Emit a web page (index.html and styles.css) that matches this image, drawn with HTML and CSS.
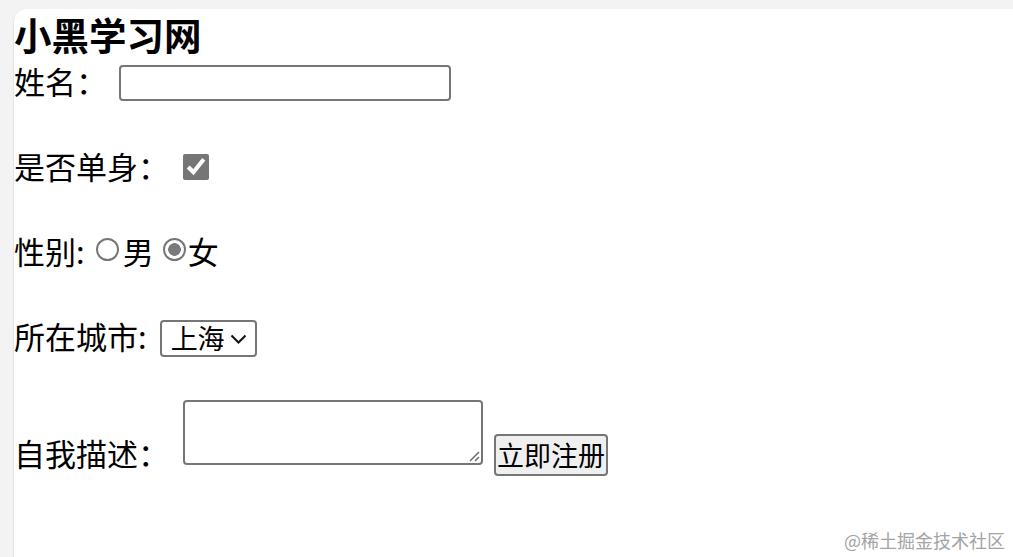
FILE: index.html
```html
<!DOCTYPE html>
<html lang="zh-CN">
<head>
<meta charset="utf-8">
<title>小黑学习网</title>
<link rel="stylesheet" href="styles.css">
</head>
<body>
<div class="card">
  <h3 class="title">小黑学习网</h3>
  <form class="form">
    <div class="row row-name">
      <span class="label">姓名：</span>
      <input class="text-input" type="text">
    </div>
    <div class="row row-single">
      <span class="label">是否单身：</span>
      <input class="check" type="checkbox" checked>
    </div>
    <div class="row row-gender">
      <span class="label">性别:</span>
      <input class="radio radio-male" type="radio" name="gender">
      <span class="opt opt-male">男</span>
      <input class="radio radio-female" type="radio" name="gender" checked>
      <span class="opt">女</span>
    </div>
    <div class="row row-city">
      <span class="label">所在城市:</span>
      <span class="select-wrap">
        <select class="select">
          <option>北京</option>
          <option selected>上海</option>
          <option>广州</option>
        </select>
        <svg class="chevron" width="17" height="10" viewBox="0 0 17 10"><path d="M1.5 1.5 L8.5 8.5 L15.5 1.5" fill="none" stroke="#111" stroke-width="2"/></svg>
      </span>
    </div>
    <div class="row row-desc">
      <span class="label label-desc">自我描述：</span>
      <span class="area-wrap">
        <textarea class="area"></textarea>
        <svg class="grip" width="12" height="12" viewBox="0 0 12 12"><path d="M11 2 L2 11 M11 7 L7 11" fill="none" stroke="#6b6b6b" stroke-width="1.5"/></svg>
      </span>
      <button class="submit" type="button">立即注册</button>
    </div>
  </form>
</div>
<div class="watermark">@稀土掘金技术社区</div>
</body>
</html>
```

FILE: styles.css
```css
html, body {
  margin: 0;
  padding: 0;
  height: 100%;
  overflow: hidden;
}
body {
  background: #f3f3f3;
  font-family: "Noto Sans CJK SC", "Microsoft YaHei", sans-serif;
  color: #000;
  position: relative;
}
.card {
  margin: 9px 0 0 13px;
  min-height: 560px;
  background: #fff;
  border-left: 1px solid #e6e6e6;
  border-top-left-radius: 13px;
  padding-top: 3px;
}
.title {
  margin: 0;
  font-size: 37.5px;
  font-weight: 700;
  line-height: 44px;
  height: 44px;
}
.form {
  display: flex;
  flex-direction: column;
  margin-top: 2px;
}
.row {
  display: flex;
  align-items: center;
  height: 50px;
  margin-bottom: 35px;
}
.label {
  font-size: 31px;
  line-height: 31px;
  margin-bottom: 6px;
  white-space: nowrap;
}
.text-input {
  margin: 0 0 0 12px;
  width: 332px;
  height: 36px;
  box-sizing: border-box;
  border: 2px solid #767676;
  border-radius: 4px;
  background: #fff;
  padding: 0 4px;
  font-size: 24px;
  font-family: inherit;
  outline: none;
}
.check {
  margin: 0 0 2px 14px;
  width: 26px;
  height: 26px;
  accent-color: #767676;
}
.radio {
  appearance: none;
  -webkit-appearance: none;
  box-sizing: border-box;
  width: 23px;
  height: 23px;
  margin: 0 0 7px 0;
  border: 2px solid #767676;
  border-radius: 50%;
  background: #fff;
}
.radio:checked {
  background: radial-gradient(circle, #7a7a7a 0 6px, #fff 6.6px);
}
.radio-male {
  margin-left: 11px;
}
.radio-female {
  margin-left: 9px;
}
.opt {
  font-size: 31px;
  line-height: 31px;
  margin-left: 2px;
  margin-bottom: 6px;
}
.opt-male {
  margin-left: 4px;
}
.select-wrap {
  position: relative;
  display: inline-flex;
  margin-left: 13px;
}
.select {
  appearance: none;
  -webkit-appearance: none;
  width: 97px;
  height: 37px;
  box-sizing: border-box;
  border: 2px solid #767676;
  border-radius: 4px;
  background: #fff;
  padding: 0 0 0 9px;
  font-family: inherit;
  font-size: 27px;
  line-height: 30px;
  color: #000;
  outline: none;
}
.chevron {
  position: absolute;
  right: 10px;
  top: 14px;
  pointer-events: none;
}
.row-desc {
  align-items: flex-end;
  height: auto;
  margin-top: 2px;
  margin-bottom: 0;
}
.label-desc {
  line-height: 36px;
  margin-bottom: 5px;
}
.area-wrap {
  position: relative;
  display: inline-flex;
  margin-left: 14px;
  margin-bottom: 11px;
}
.area {
  width: 300px;
  height: 65px;
  box-sizing: border-box;
  border: 2px solid #767676;
  border-radius: 4px;
  resize: none;
  margin: 0;
  padding: 2px;
  font-family: inherit;
  outline: none;
}
.grip {
  position: absolute;
  right: 3px;
  bottom: 3px;
  pointer-events: none;
}
.submit {
  margin-left: 11px;
  height: 42px;
  width: 114px;
  box-sizing: border-box;
  border: 2px solid #767676;
  border-radius: 4px;
  background: #efefef;
  padding: 0;
  font-family: inherit;
  font-size: 27px;
  line-height: 36px;
  color: #000;
}
.watermark {
  position: absolute;
  right: 8px;
  bottom: 6px;
  font-size: 18px;
  line-height: 22px;
  color: #a3a3a3;
  font-family: "Noto Sans CJK SC", sans-serif;
}
```
